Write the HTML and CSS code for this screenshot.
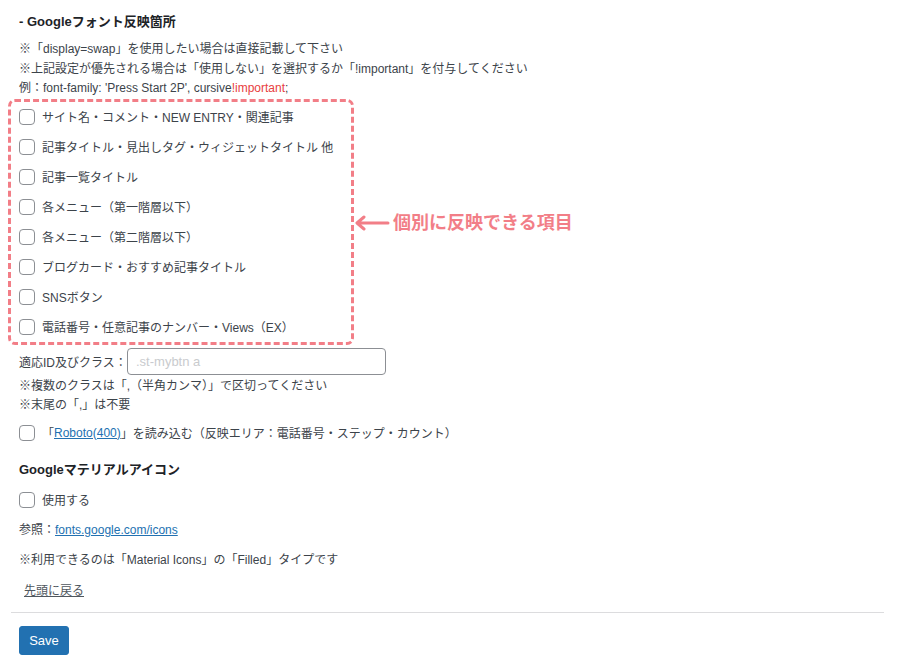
FILE: index.html
```html
<!DOCTYPE html>
<html lang="ja">
<head>
<meta charset="utf-8">
<title>Googleフォント設定</title>
<link rel="stylesheet" href="styles.css">
</head>
<body>
<div class="page">
  <h3 class="sec-title">- Googleフォント反映箇所</h3>
  <div class="notes">
    <p>※「display=swap」を使用したい場合は直接記載して下さい</p>
    <p>※上記設定が優先される場合は「使用しない」を選択するか「!important」を付与してください</p>
    <p>例：font-family: 'Press Start 2P', cursive<span class="red">!important</span>;</p>
  </div>

  <div class="dash-box">
    <label class="row"><span class="cb"></span>サイト名・コメント・NEW ENTRY・関連記事</label>
    <label class="row"><span class="cb"></span>記事タイトル・見出しタグ・ウィジェットタイトル 他</label>
    <label class="row"><span class="cb"></span>記事一覧タイトル</label>
    <label class="row"><span class="cb"></span>各メニュー（第一階層以下）</label>
    <label class="row"><span class="cb"></span>各メニュー（第二階層以下）</label>
    <label class="row"><span class="cb"></span>ブログカード・おすすめ記事タイトル</label>
    <label class="row"><span class="cb"></span>SNSボタン</label>
    <label class="row"><span class="cb"></span>電話番号・任意記事のナンバー・Views（EX）</label>
    <div class="annot">
      <svg class="arrow" width="36" height="16" viewBox="0 0 36 16"><path d="M34 8H4M10 2L3 8L10 14" fill="none" stroke="#f27e87" stroke-width="3" stroke-linecap="round" stroke-linejoin="round"/></svg>
      <span class="annot-text">個別に反映できる項目</span>
    </div>
  </div>

  <div class="id-row">
    <span class="id-label">適応ID及びクラス：</span>
    <span class="input">.st-mybtn a</span>
  </div>
  <div class="notes2">
    <p>※複数のクラスは「,（半角カンマ）」で区切ってください</p>
    <p>※末尾の「,」は不要</p>
  </div>

  <label class="row roboto"><span class="cb"></span>「<a href="#" class="link">Roboto(400)</a>」を読み込む（反映エリア：電話番号・ステップ・カウント）</label>

  <h3 class="sec-title2">Googleマテリアルアイコン</h3>
  <label class="row use"><span class="cb"></span>使用する</label>
  <p class="line">参照：<a href="#" class="link">fonts.google.com/icons</a></p>
  <p class="line">※利用できるのは「Material Icons」の「Filled」タイプです</p>
  <p class="line back"><a href="#" class="back-link">先頭に戻る</a></p>
  <hr class="sep">
  <button class="save">Save</button>
</div>
</body>
</html>
```

FILE: styles.css
```css
* { box-sizing: border-box; }
body {
  margin: 0;
  background: #fff;
  color: #3c434a;
  font-family: "Liberation Sans", "Noto Sans CJK JP", sans-serif;
  font-size: 12px;
}
p { margin: 0; }
.page { padding: 12px 0 0 19px; }
.sec-title {
  margin: 0;
  font-size: 13px;
  line-height: 20px;
  font-weight: bold;
  color: #1d2327;
}
.notes { margin-top: 8px; line-height: 19.5px; }
.red { color: #e8403f; }
.dash-box {
  position: relative;
  width: 346px;
  margin: 0 0 0 -11px;
  padding: 0 0 0 8px;
  border: 3px dashed #f27e87;
  border-radius: 7px;
}
.row {
  display: flex;
  align-items: center;
  height: 30px;
}
.cb {
  width: 16px;
  height: 16px;
  border: 1px solid #8c8f94;
  border-radius: 4px;
  background: #fff;
  margin-right: 7px;
  flex: none;
}
.annot {
  position: absolute;
  left: 100%;
  top: 109px;
  display: flex;
  align-items: center;
  margin-left: 3px;
  white-space: nowrap;
}
.arrow { display: block; margin-right: 3px; }
.annot-text {
  color: #f27e87;
  font-size: 18px;
  font-weight: bold;
  line-height: 24px;
}
.id-row {
  display: flex;
  align-items: center;
  height: 27px;
  margin-top: 3px;
}
.id-label { width: 108px; }
.input {
  width: 259px;
  height: 27px;
  border: 1px solid #8c8f94;
  border-radius: 4px;
  color: #c9cbce;
  padding: 0 8px;
  display: flex;
  align-items: center;
  font-size: 13px;
}
.notes2 { margin-top: 2px; line-height: 19px; }
.roboto { margin-top: 3px; }
.link { color: #2271b1; text-decoration: underline; }
.sec-title2 {
  margin: 12px 0 0;
  font-size: 13px;
  line-height: 20px;
  font-weight: bold;
  color: #1d2327;
}
.use { margin-top: 5px; }
.line { line-height: 30px; }
.back { padding-left: 5px; padding-top: 1px; }
.back-link { color: #50575e; text-decoration: underline; }
.sep {
  margin: 6px 0 0 -8px;
  width: 873px;
  border: 0;
  border-top: 1px solid #dcdcde;
  height: 0;
}
.save {
  margin-top: 13px;
  width: 50px;
  height: 29px;
  background: #2271b1;
  color: #fff;
  border: 1px solid #2271b1;
  border-radius: 3px;
  font-family: "Liberation Sans", sans-serif;
  font-size: 13px;
  padding: 0;
}
```
